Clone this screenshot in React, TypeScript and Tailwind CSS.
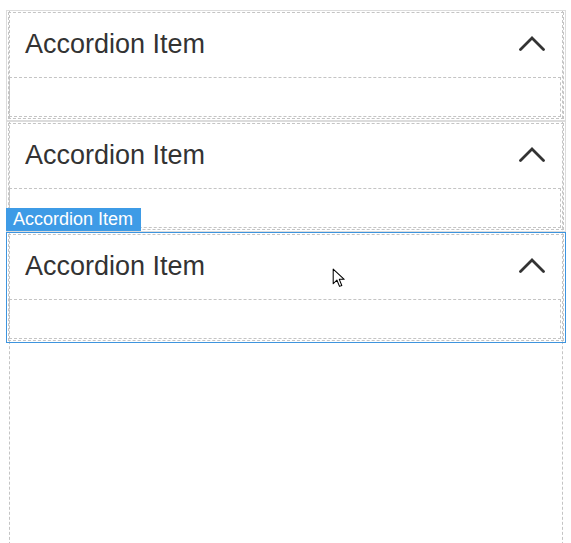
import React from "react";

function Chevron() {
  return (
    <svg width="26" height="16" viewBox="0 0 26 16" className="block">
      <polyline points="1.5,13.5 13,2 24.5,13.5" fill="none" stroke="#333333" strokeWidth="2.8" strokeLinecap="round" strokeLinejoin="miter" />
    </svg>
  );
}

function Item({ selected }: { selected?: boolean }) {
  return (
    <div
      className={
        "relative h-[111px] -ml-[4px] -mr-[4px] border p-[1px] " +
        (selected ? "border-[#3d94de]" : "border-[#dcdcdc]")
      }
    >
      {selected && (
        <div className="absolute left-[-1px] top-[-25px] h-[23px] w-[135px] bg-[#3e9be6] text-white text-[18px] leading-[23px] pl-[7px] font-['Liberation_Sans',Arial,sans-serif]">
          Accordion Item
        </div>
      )}
      <div className="h-full border border-dashed border-[#c4c4c4] flex flex-col">
        <div className="h-[64px] flex items-center justify-between pl-[16px] pr-[18px] pb-[2px]">
          <span className="text-[27px] text-[#333333] font-['Liberation_Sans',Arial,sans-serif]">Accordion Item</span>
          <Chevron />
        </div>
        <div className="h-[40px] mr-[2px] border border-dashed border-[#c4c4c4]"></div>
      </div>
    </div>
  );
}

export default function App() {
  return (
    <div className="relative h-[543px] w-[571px] overflow-hidden bg-white">
      <div className="ml-[9px] mr-[8px] mt-[10px] h-[560px] border border-dashed border-[#c4c4c4] border-t-0">
        <Item />
        <Item />
        <Item selected />
      </div>
      <svg className="absolute left-[332px] top-[268px]" width="15" height="21" viewBox="0 0 14 20">
        <path d="M1 1 L1 15 L4.5 11.5 L7 17.5 L9.2 16.6 L6.8 10.8 L11.5 10.8 Z" fill="#ffffff" stroke="#000000" strokeWidth="1" strokeLinejoin="round" />
      </svg>
    </div>
  );
}
